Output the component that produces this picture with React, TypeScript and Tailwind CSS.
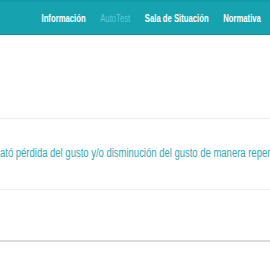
export default function App() {
  const font = { fontFamily: '"Liberation Sans", Arial, sans-serif' };
  return (
    <div className="w-[270px] h-[269px] overflow-hidden bg-white" style={font}>
      <header className="h-[35px] bg-[#17a2b0] border-t-[2px] border-t-[#139aa8] border-b border-b-[#0f8c99] flex items-center justify-end pr-[9px]">
        <nav className="flex items-center gap-[19px] text-[10px] font-bold text-white whitespace-nowrap scale-x-[0.77] origin-right">
          <a>Información</a>
          <a className="font-normal text-[#5ccbd6]">AutoTest</a>
          <a>Sala de Situación</a>
          <a>Normativa</a>
        </nav>
      </header>

      <div className="h-[83px]" />

      <div className="h-[71px] border-t border-[#ececec] flex items-center overflow-hidden">
        <p className="whitespace-nowrap text-[12px] text-[#2eaab6] pb-[2px] scale-x-[0.79] origin-left">
          ató pérdida del gusto y/o disminución del gusto de manera repentina
        </p>
      </div>

      <div className="h-[51px] border-t border-[#f1f1f1]" />

      <div className="h-[29px] border-t-2 border-[#dcdcdc] shadow-[0_1px_2px_rgba(0,0,0,0.06)]" />
    </div>
  );
}
